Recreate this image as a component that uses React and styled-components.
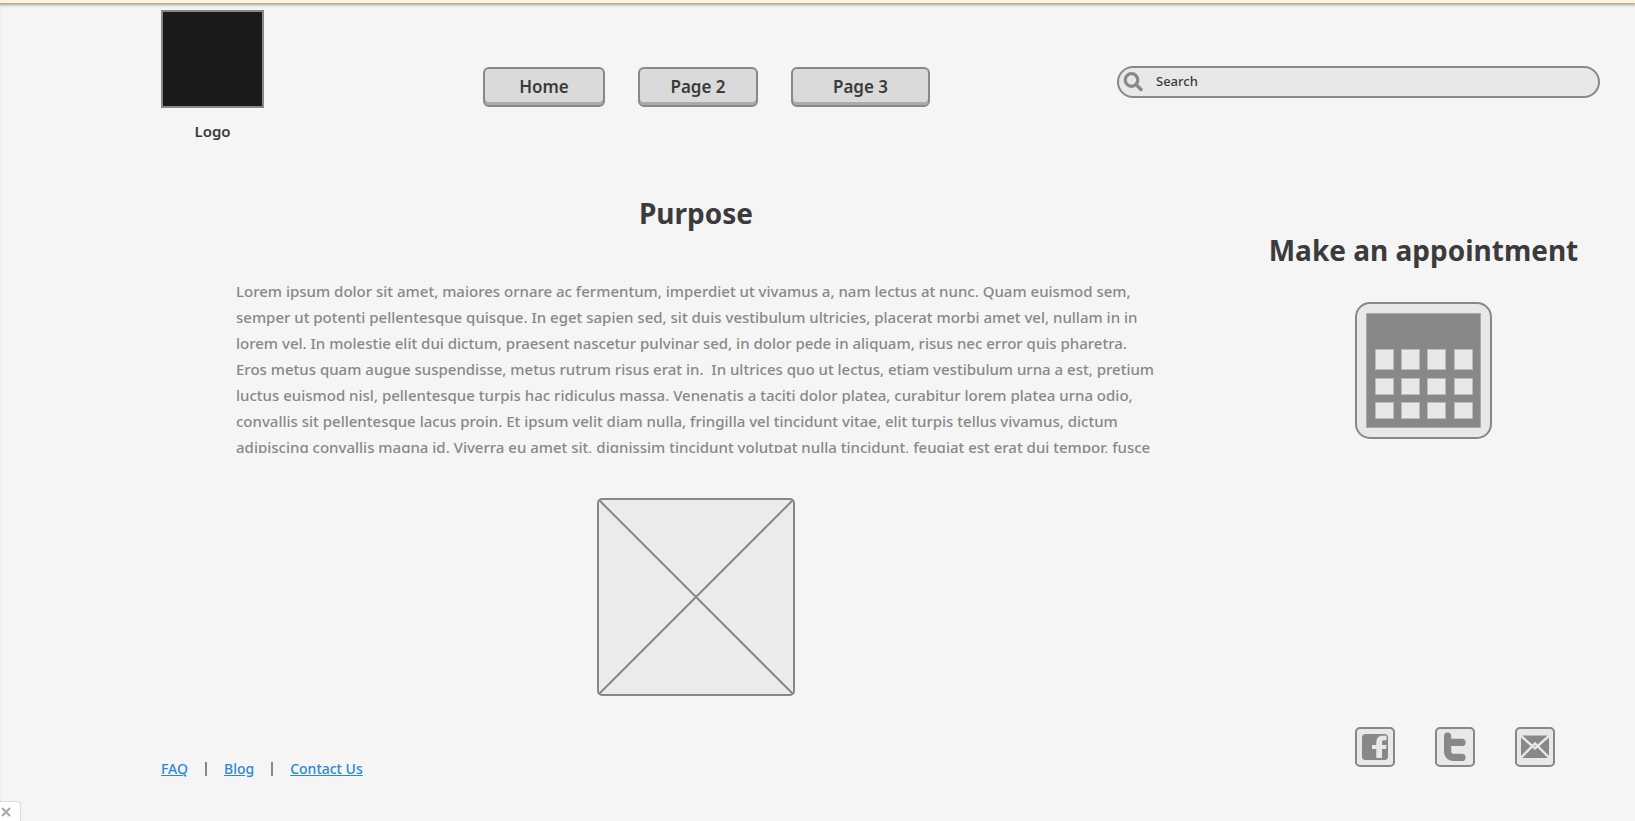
import React from 'react';
import styled, { createGlobalStyle } from 'styled-components';

const line = '#888';
const ink = '#3b3b3b';
const fill = '#e8e8e8';

const GlobalStyle = createGlobalStyle`
  *, *::before, *::after { box-sizing: border-box; }
  body {
    margin: 0;
    background: #f5f5f5;
    color: ${ink};
    font-family: "Noto Sans", "Open Sans", sans-serif;
  }
  h1, h2, p { margin: 0; }
`;

const Page = styled.div`
  min-height: 100vh;
  box-shadow: inset 2px 0 2px -1px #ececec;
`;

const Notice = styled.div`
  position: relative;
  height: 3px;
  background: #fff4d6;
  box-shadow: 0 1px 3px 1px rgba(0, 0, 0, 0.35);
`;

const Header = styled.header`
  display: flex;
  align-items: flex-start;
  padding: 7px 35px 0 161px;
`;

const Brand = styled.div`
  width: 103px;
  text-align: center;
`;

const LogoBox = styled.div`
  height: 98px;
  margin-bottom: 13px;
  border: 2px solid ${line};
  background: #1a1a1a;
`;

const LogoText = styled.div`
  font-size: 15px;
  font-weight: 600;
  line-height: 20px;
`;

const Nav = styled.nav`
  display: flex;
  gap: 33px;
  margin: 57px 187px 0 219px;
`;

const NavButton = styled.button`
  width: ${p => p.$width}px;
  height: 40px;
  padding: 0;
  border: 2px solid ${line};
  border-radius: 6px;
  background: #dadada;
  box-shadow: inset 0 -3px 0 #aaa;
  color: ${ink};
  font: inherit;
  font-size: 17px;
  font-weight: 600;
  line-height: 36px;
  cursor: pointer;
`;

const SearchBox = styled.label`
  display: flex;
  flex: 1;
  align-items: center;
  gap: 12px;
  min-width: 0;
  height: 32px;
  margin-top: 56px;
  padding: 0 16px 0 4px;
  border: 2px solid ${line};
  border-radius: 16px;
  background: ${fill};
`;

const SearchInput = styled.input`
  flex: 1;
  min-width: 0;
  height: 24px;
  padding: 0 0 2px;
  border: 0;
  outline: 0;
  background: transparent;
  color: ${ink};
  font: inherit;
  font-size: 13px;
  font-weight: 500;
  &::placeholder { color: ${ink}; opacity: 1; }
`;

const Main = styled.main`
  display: grid;
  grid-template-columns: minmax(0, 1fr) 329px;
  gap: 103px;
  padding: 52px 47px 0 236px;
`;

const Purpose = styled.section`
  display: flex;
  flex-direction: column;
  align-items: center;
  gap: 45px;
`;

const Heading = styled.h1`
  font-size: 28px;
  font-weight: 700;
  line-height: 40px;
  white-space: nowrap;
`;

const Copy = styled.p`
  width: 100%;
  height: 175px;
  overflow: hidden;
  color: ${line};
  font-size: 15px;
  font-weight: 500;
  line-height: 26px;
`;

const CopyLine = styled.span`
  display: block;
  white-space: pre;
`;

const Aside = styled.aside`
  display: flex;
  flex-direction: column;
  align-items: center;
  gap: 32px;
  padding-top: 37px;
`;

const IconButton = styled.button`
  display: block;
  padding: 0;
  border: 0;
  background: none;
  cursor: pointer;
`;

const Drawing = styled.svg`
  display: block;
`;

const Footer = styled.footer`
  display: flex;
  justify-content: space-between;
  padding: 31px 80px 44px 161px;
`;

const Links = styled.nav`
  display: flex;
  align-items: center;
  gap: 17px;
  height: 20px;
  margin-top: 32px;
`;

const FooterLink = styled.a`
  color: #2b87d8;
  font-size: 14px;
  font-weight: 500;
  line-height: 20px;
`;

const Separator = styled.span`
  width: 2px;
  height: 14px;
  background: ${line};
`;

const Social = styled.div`
  display: flex;
  gap: 40px;
`;

const SocialLink = styled.a`
  display: block;
  width: 40px;
  height: 40px;
`;

const CloseTab = styled.button`
  position: fixed;
  bottom: 0;
  left: 0;
  display: flex;
  align-items: center;
  width: 21px;
  height: 20px;
  padding: 0;
  border: 1px solid #dcdcdc;
  border-width: 1px 1px 0 0;
  border-radius: 0 4px 0 0;
  background: #fff;
  cursor: pointer;
`;

const lines = [
  'Lorem ipsum dolor sit amet, maiores ornare ac fermentum, imperdiet ut vivamus a, nam lectus at nunc. Quam euismod sem,',
  'semper ut potenti pellentesque quisque. In eget sapien sed, sit duis vestibulum ultricies, placerat morbi amet vel, nullam in in',
  'lorem vel. In molestie elit dui dictum, praesent nascetur pulvinar sed, in dolor pede in aliquam, risus nec error quis pharetra.',
  'Eros metus quam augue suspendisse, metus rutrum risus erat in.  In ultrices quo ut lectus, etiam vestibulum urna a est, pretium',
  'luctus euismod nisl, pellentesque turpis hac ridiculus massa. Venenatis a taciti dolor platea, curabitur lorem platea urna odio,',
  'convallis sit pellentesque lacus proin. Et ipsum velit diam nulla, fringilla vel tincidunt vitae, elit turpis tellus vivamus, dictum',
  'adipiscing convallis magna id. Viverra eu amet sit, dignissim tincidunt volutpat nulla tincidunt, feugiat est erat dui tempor, fusce',
];

const SearchIcon = () => (
  <Drawing width="21" height="22" viewBox="0 0 21 22" fill="none" stroke={line} strokeLinecap="round" aria-hidden="true">
    <circle cx="8.5" cy="9" r="6.3" strokeWidth="3.2" />
    <path d="M13.5 14l4.5 4.5" strokeWidth="3.4" />
  </Drawing>
);

const CalendarIcon = () => (
  <Drawing width="137" height="137" viewBox="0 0 137 137" aria-hidden="true">
    <rect x="1" y="1" width="135" height="135" rx="14" fill={fill} stroke={line} strokeWidth="2" />
    <rect x="11.5" y="11.5" width="114" height="114" fill={line} stroke="#aaa" />
    {[[47, 21], [76, 17], [100, 17]].map(([y, h]) =>
      [20, 46, 72, 99].map(x => (
        <rect key={`${x}-${y}`} x={x + 0.5} y={y + 0.5} width="18" height={h - 1} fill={fill} stroke="#bbb" />
      ))
    )}
  </Drawing>
);

const PlaceholderImage = () => (
  <Drawing width="198" height="198" viewBox="0 0 198 198" fill="none" stroke={line} strokeWidth="2" role="img" aria-label="Placeholder">
    <rect x="1" y="1" width="196" height="196" rx="4" fill="#ebebeb" />
    <path d="M2 2l194 194M196 2L2 196" />
  </Drawing>
);

const SocialFrame = ({ children }) => (
  <Drawing width="40" height="40" viewBox="0 0 40 40" aria-hidden="true">
    <rect x="1" y="1" width="38" height="38" rx="4" fill={fill} stroke={line} strokeWidth="2" />
    {children}
  </Drawing>
);

const FacebookIcon = () => (
  <SocialFrame>
    <rect x="7" y="7" width="26" height="26" rx="3.5" fill={line} />
    <path
      d="M21.3 31V22H17v-4h4.3v-2.2c0-4.4 2.3-7 6.2-7h4v4.4h-2.5c-1.4 0-2 .7-2 2V18H31.5l-.5 4h-4v9z"
      fill={fill}
    />
  </SocialFrame>
);

const TwitterIcon = () => (
  <SocialFrame>
    <path
      d="M12.6 9v15.5c0 3.8 2 5.9 5.7 5.9H27M12.6 15.4H27"
      fill="none"
      stroke={line}
      strokeWidth="7.2"
      strokeLinecap="round"
    />
  </SocialFrame>
);

const MailIcon = () => (
  <SocialFrame>
    <rect x="6" y="8.5" width="28" height="22.5" fill={line} />
    <path d="M5 8l15 13.5L35 8M5 31.5l15-15 15 15" fill="none" stroke={fill} strokeWidth="2.4" />
  </SocialFrame>
);

export default function App() {
  return (
    <Page>
      <GlobalStyle />
      <Notice />
      <Header>
        <Brand>
          <LogoBox />
          <LogoText>Logo</LogoText>
        </Brand>
        <Nav>
          <NavButton $width={122}>Home</NavButton>
          <NavButton $width={120}>Page 2</NavButton>
          <NavButton $width={139}>Page 3</NavButton>
        </Nav>
        <SearchBox>
          <SearchIcon />
          <SearchInput type="search" placeholder="Search" aria-label="Search" />
        </SearchBox>
      </Header>
      <Main>
        <Purpose>
          <Heading>Purpose</Heading>
          <Copy>
            {lines.map(text => <CopyLine key={text}>{text}</CopyLine>)}
          </Copy>
          <PlaceholderImage />
        </Purpose>
        <Aside>
          <Heading as="h2">Make an appointment</Heading>
          <IconButton aria-label="Open calendar"><CalendarIcon /></IconButton>
        </Aside>
      </Main>
      <Footer>
        <Links>
          <FooterLink href="#faq">FAQ</FooterLink>
          <Separator />
          <FooterLink href="#blog">Blog</FooterLink>
          <Separator />
          <FooterLink href="#contact">Contact Us</FooterLink>
        </Links>
        <Social>
          <SocialLink href="#facebook" aria-label="Facebook"><FacebookIcon /></SocialLink>
          <SocialLink href="#twitter" aria-label="Twitter"><TwitterIcon /></SocialLink>
          <SocialLink href="#mail" aria-label="Email"><MailIcon /></SocialLink>
        </Social>
      </Footer>
      <CloseTab aria-label="Close">
        <Drawing width="12" height="12" viewBox="0 0 12 12" stroke="#aaa" strokeWidth="2.2" aria-hidden="true">
          <path d="M2 2l8 8M10 2l-8 8" />
        </Drawing>
      </CloseTab>
    </Page>
  );
}
